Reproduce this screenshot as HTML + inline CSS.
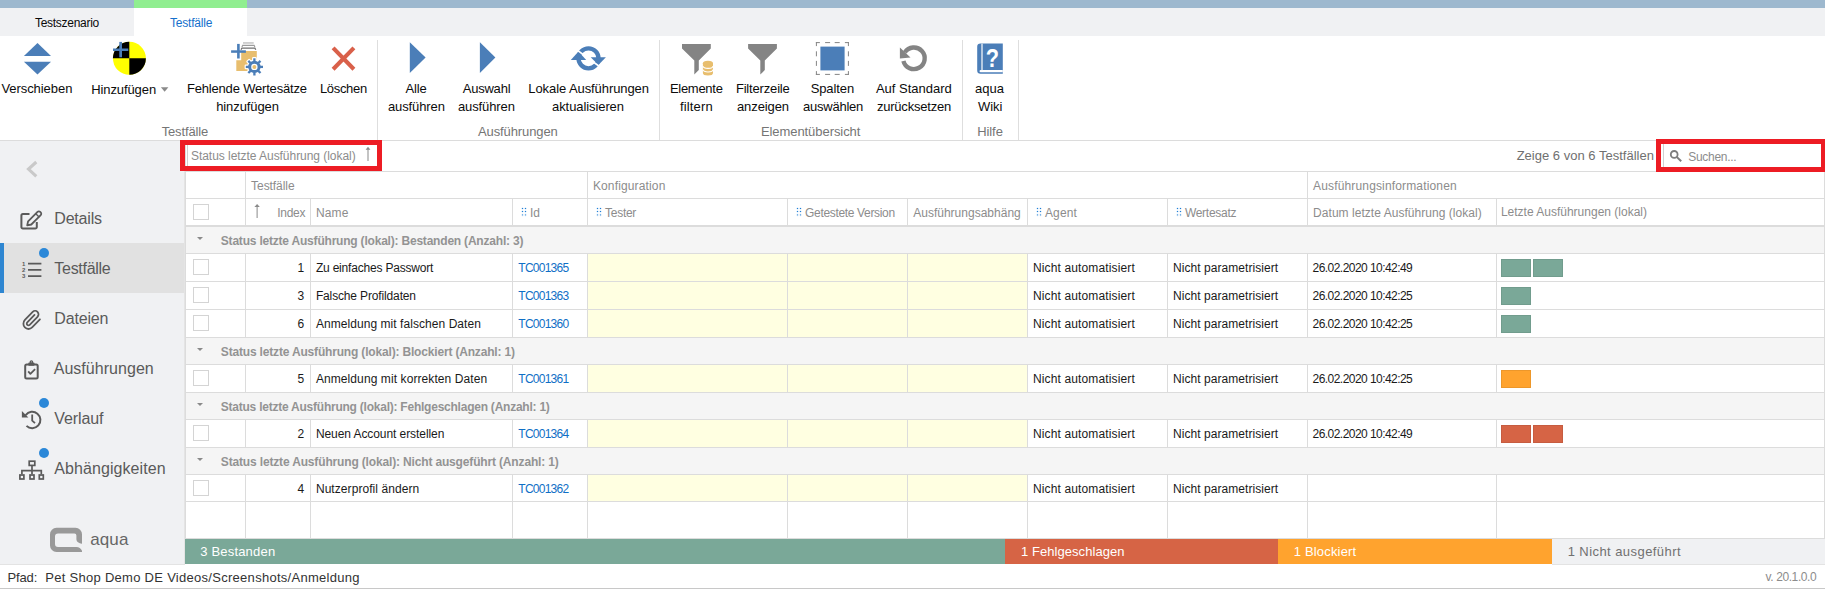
<!DOCTYPE html><html lang="de"><head><meta charset="utf-8"><title>aqua - Testszenario - Testfälle</title><style>html,body{margin:0;padding:0;}
body{width:1825px;height:589px;position:relative;overflow:hidden;background:#fff;font-family:'Liberation Sans',sans-serif;}
body>*{position:absolute;}
.t{white-space:pre;}
#topbar{left:0;top:0;width:1825px;height:8px;background:#9db8ce;}
#tabrow{left:0;top:8px;width:1825px;height:28px;background:#f0f1f3;}
#tabgreen{left:134px;top:0;width:113px;height:8px;background:#90ee90;}
#tabactive{left:134px;top:8px;width:113px;height:28px;background:#fff;}
#ribbon{left:0;top:36px;width:1825px;height:104px;background:#fff;border-bottom:1px solid #dcdcdc;}
.rsep{top:40px;width:1px;height:100px;background:#dedede;}
#ddarrow{left:160.8px;top:87.6px;width:0;height:0;border-left:3.6px solid transparent;border-right:3.6px solid transparent;border-top:4.4px solid #8a8a8a;}
#sidebar{left:0;top:141px;width:184px;height:424px;background:#f0f1f3;border-right:1px solid #e4e4e4;}
#navsel{left:0;top:243px;width:184px;height:50px;background:#e1e1e1;}
#navbar{left:0;top:243px;width:4px;height:50px;background:#2e86d1;}
.dot{left:39px;width:10px;height:10px;border-radius:5px;background:#2b88d8;}
#gridbg{left:185px;top:141px;width:1638px;height:397px;background:#fff;border-left:1px solid #dcdcdc;border-right:1px solid #dcdcdc;}
.vl{width:1px;background:#dcdcdc;}
.hl{left:185px;width:1640px;height:1px;background:#dcdcdc;}
.hl2{left:185px;width:1640px;height:2px;background:#dcdcdc;}
.grp{left:186px;width:1638px;background:#f5f5f5;}
.tri{left:197.2px;width:0;height:0;border-left:3.4px solid transparent;border-right:3.4px solid transparent;border-top:3.6px solid #8a8a8a;}
.yel{left:588px;width:439px;background:#ffffe1;}
.cb{left:193px;width:14px;height:14px;border:1px solid #d4d4d4;background:#fff;}
.bar{width:30px;height:18px;box-shadow:inset 0 0 0 1px rgba(0,0,0,.07);}
.sb{top:539px;height:25px;}
#footer{left:0;top:564px;width:1825px;height:24px;background:#fff;border-bottom:1px solid #c8c8c8;}#footline{left:0;top:564px;width:185px;height:1px;background:#e3e3e3;}#footline2{left:1552px;top:564px;width:273px;height:1px;background:#e3e3e3;}
.red{border:5px solid #ed1c24;}
</style></head><body><div id="topbar"></div><div id="tabrow"></div><div id="tabgreen"></div><div id="tabactive"></div><span class="t" style="left:35.00px;top:16.84px;font-size:12px;line-height:12px;color:#0a0a0a;letter-spacing:-0.290px;">Testszenario</span><span class="t" style="left:169.90px;top:16.84px;font-size:12px;line-height:12px;color:#1570cc;letter-spacing:-0.181px;">Testfälle</span><div id="ribbon"></div><span class="t" style="left:1.38px;top:81.80px;font-size:13px;line-height:13px;color:#0c0c0c;letter-spacing:-0.056px;">Verschieben</span><span class="t" style="left:91.27px;top:82.60px;font-size:13px;line-height:13px;color:#0c0c0c;letter-spacing:-0.103px;">Hinzufügen</span><span class="t" style="left:186.98px;top:81.80px;font-size:13px;line-height:13px;color:#0c0c0c;letter-spacing:-0.184px;">Fehlende Wertesätze</span><span class="t" style="left:216.18px;top:99.60px;font-size:13px;line-height:13px;color:#0c0c0c;letter-spacing:-0.098px;">hinzufügen</span><span class="t" style="left:319.88px;top:81.80px;font-size:13px;line-height:13px;color:#0c0c0c;letter-spacing:-0.315px;">Löschen</span><span class="t" style="left:405.48px;top:81.80px;font-size:13px;line-height:13px;color:#0c0c0c;letter-spacing:-0.159px;">Alle</span><span class="t" style="left:387.98px;top:99.60px;font-size:13px;line-height:13px;color:#0c0c0c;letter-spacing:-0.109px;">ausführen</span><span class="t" style="left:462.68px;top:81.80px;font-size:13px;line-height:13px;color:#0c0c0c;letter-spacing:-0.213px;">Auswahl</span><span class="t" style="left:457.98px;top:99.60px;font-size:13px;line-height:13px;color:#0c0c0c;letter-spacing:-0.109px;">ausführen</span><span class="t" style="left:528.27px;top:81.80px;font-size:13px;line-height:13px;color:#0c0c0c;letter-spacing:-0.079px;">Lokale Ausführungen</span><span class="t" style="left:552.07px;top:99.60px;font-size:13px;line-height:13px;color:#0c0c0c;letter-spacing:-0.088px;">aktualisieren</span><span class="t" style="left:669.88px;top:81.80px;font-size:13px;line-height:13px;color:#0c0c0c;letter-spacing:-0.271px;">Elemente</span><span class="t" style="left:679.88px;top:99.60px;font-size:13px;line-height:13px;color:#0c0c0c;letter-spacing:0.165px;">filtern</span><span class="t" style="left:735.88px;top:81.80px;font-size:13px;line-height:13px;color:#0c0c0c;letter-spacing:-0.170px;">Filterzeile</span><span class="t" style="left:736.97px;top:99.60px;font-size:13px;line-height:13px;color:#0c0c0c;letter-spacing:-0.091px;">anzeigen</span><span class="t" style="left:810.67px;top:81.80px;font-size:13px;line-height:13px;color:#0c0c0c;letter-spacing:-0.106px;">Spalten</span><span class="t" style="left:802.97px;top:99.60px;font-size:13px;line-height:13px;color:#0c0c0c;letter-spacing:-0.223px;">auswählen</span><span class="t" style="left:875.88px;top:81.80px;font-size:13px;line-height:13px;color:#0c0c0c;letter-spacing:0.005px;">Auf Standard</span><span class="t" style="left:876.88px;top:99.60px;font-size:13px;line-height:13px;color:#0c0c0c;letter-spacing:-0.204px;">zurücksetzen</span><span class="t" style="left:974.97px;top:81.80px;font-size:13px;line-height:13px;color:#0c0c0c;letter-spacing:0.007px;">aqua</span><span class="t" style="left:977.88px;top:99.60px;font-size:13px;line-height:13px;color:#0c0c0c;letter-spacing:0.001px;">Wiki</span><span class="t" style="left:161.68px;top:124.60px;font-size:13px;line-height:13px;color:#757575;letter-spacing:-0.139px;">Testfälle</span><span class="t" style="left:477.98px;top:124.60px;font-size:13px;line-height:13px;color:#757575;letter-spacing:-0.100px;">Ausführungen</span><span class="t" style="left:760.88px;top:124.60px;font-size:13px;line-height:13px;color:#757575;letter-spacing:-0.063px;">Elementübersicht</span><span class="t" style="left:977.17px;top:124.60px;font-size:13px;line-height:13px;color:#757575;letter-spacing:-0.073px;">Hilfe</span><div class="rsep" style="left:377px"></div><div class="rsep" style="left:659px"></div><div class="rsep" style="left:962px"></div><div class="rsep" style="left:1018px"></div><svg id="ribbon-icons" width="1825" height="141" viewBox="0 0 1825 141" style="left:0;top:0">
<g fill="#4b7eb8">
<polygon points="23.9,56 51,56 37.5,43"/><polygon points="23.9,61.7 51,61.7 37.5,74.4"/>
</g>
<circle cx="129.4" cy="58.35" r="16.5" fill="#ffff00"/>
<path d="M129.3,58.2H112.9A16.5,16.5 0 0 1 129.3,41.85Z" fill="#000"/>
<path d="M129.3,58.2H145.9A16.5,16.5 0 0 1 129.3,74.85Z" fill="#000"/>
<g fill="#4b7eb8"><rect x="113" y="48.5" width="15.3" height="2.5"/><rect x="119.3" y="41.9" width="2.7" height="15.4"/></g>
<g id="ic-wertesatz">
<rect x="243" y="42.2" width="10.7" height="1.5" fill="#c4c4c4"/>
<path d="M241.9,46.9L242.7,45.3H254.1L254.9,46.9" stroke="#9c9c9c" stroke-width="1.2" fill="none"/>
<path d="M241,49.8L241.9,48.1H254.9L255.8,49.8" stroke="#707070" stroke-width="1.2" fill="none"/>
<path d="M241.2,51H256.8V71H236.3V60.2H241.2Z" fill="#e8be6e"/>
<g transform="translate(254.4 66.9)" fill="#fff" stroke="#fff" stroke-width="2.4" stroke-linejoin="round"><circle r="4.7" fill="none" stroke-width="5.4"/>
<rect x="-1.15" y="-8.6" width="2.3" height="3.4"/><rect x="-1.15" y="5.2" width="2.3" height="3.4"/>
<rect x="-8.6" y="-1.15" width="3.4" height="2.3"/><rect x="5.2" y="-1.15" width="3.4" height="2.3"/>
<g transform="rotate(45)"><rect x="-1.15" y="-8.6" width="2.3" height="3.4"/><rect x="-1.15" y="5.2" width="2.3" height="3.4"/>
<rect x="-8.6" y="-1.15" width="3.4" height="2.3"/><rect x="5.2" y="-1.15" width="3.4" height="2.3"/></g></g>
<g fill="#4b7eb8"><rect x="231.1" y="50.3" width="14.8" height="2.5"/><rect x="237.1" y="43.9" width="2.6" height="14.6"/></g>
<g transform="translate(254.4 66.9)" fill="#4b7eb8">
<circle r="4.7" fill="none" stroke="#4b7eb8" stroke-width="3"/>
<rect x="-1.15" y="-8.6" width="2.3" height="3.4"/><rect x="-1.15" y="5.2" width="2.3" height="3.4"/>
<rect x="-8.6" y="-1.15" width="3.4" height="2.3"/><rect x="5.2" y="-1.15" width="3.4" height="2.3"/>
<g transform="rotate(45)"><rect x="-1.15" y="-8.6" width="2.3" height="3.4"/><rect x="-1.15" y="5.2" width="2.3" height="3.4"/>
<rect x="-8.6" y="-1.15" width="3.4" height="2.3"/><rect x="5.2" y="-1.15" width="3.4" height="2.3"/></g>
</g>
</g>
<path d="M333.1,47.9L353.9,69.2M353.9,47.9L333.1,69.2" stroke="#d9604a" stroke-width="4.1" fill="none"/>
<g fill="#4b7eb8">
<polygon points="409.8,42.3 425.6,57.6 409.8,72.9"/><polygon points="479.9,42.3 495.4,57.6 479.9,72.9"/>
</g>
<g id="ic-refresh">
<circle cx="588.5" cy="58.3" r="10" fill="none" stroke="#4b7eb8" stroke-width="4.3"/>
<polygon points="570.8,59.9 578.5,51.6 586.2,59.9" fill="#4b7eb8"/>
<polygon points="590.7,57.2 605.9,57.2 598.4,65.1" fill="#4b7eb8"/>
<path d="M575.5,48.9L600.5,67.3" stroke="#fff" stroke-width="1.7"/>
</g>
<polygon points="682,44.1 710.8,44.1 710.8,48.4 698.8,60.6 698.8,70.1 694.3,74.6 694.3,60.6 682,48.4" fill="#848484"/>
<g id="ic-db" fill="#e8be6e">
<path d="M702.9,63.3V73A5.05,2.5 0 0 0 713,73V63.3Z"/>
<ellipse cx="707.95" cy="63.3" rx="5.05" ry="2.5"/>
<path d="M702.9,65.9A5.05,2.5 0 0 0 713,65.9M702.9,69.5A5.05,2.5 0 0 0 713,69.5" stroke="#fff" stroke-width="1.1" fill="none"/>
</g>
<polygon points="748.1,44.1 776.9,44.1 776.9,48.4 764.8,60.4 764.8,70.1 760.3,74.6 760.3,60.4 748.1,48.4" fill="#848484"/>
<g stroke="#858585" stroke-width="1" stroke-dasharray="4 5.2 5 4.6 5 5.2 4" fill="none">
<path d="M815.9,42.6H848.9"/><path d="M815.9,74.4H848.9"/><path d="M816.4,42.1V74.9"/><path d="M848.4,42.1V74.9"/>
</g>
<rect x="820.4" y="46.6" width="24.2" height="23.8" fill="#4b7eb8"/>
<g id="ic-reset">
<path d="M904.84,52.42A10.8,10.8 0 1 1 903.42,60.91" fill="none" stroke="#848484" stroke-width="4.4"/>
<polygon points="899.9,47.5 899.9,58.6 910.5,57.6" fill="#848484"/>
</g>
<g id="ic-wiki">
<path d="M980.5,43.4H1002.8V73.7H980.5A3.3,3.3 0 0 1 977.2,70.4V46.7A3.3,3.3 0 0 1 980.5,43.4Z" fill="#4b7eb8"/>
<path d="M1002.8,70.1H980.6A1.05,1.05 0 0 0 980.6,72.2H1002.8Z" fill="#fff"/>
<rect x="981.1" y="43.4" width="1.8" height="26.7" fill="#c3d3e6"/>
<text x="992.4" y="67" font-family="'Liberation Sans',sans-serif" font-size="26.5" font-weight="700" fill="#fff" text-anchor="middle" transform="translate(992.4 0) scale(0.82 1) translate(-992.4 0)">?</text>
</g>
<polygon points="160.9,87.3 168.4,87.3 164.65,91.8" fill="#8a8a8a"/>
</svg>
<div id="sidebar"></div><div id="navsel"></div><div id="navbar"></div><span class="t" style="left:54.30px;top:211.36px;font-size:16px;line-height:16px;color:#5a5a5a;letter-spacing:-0.201px;">Details</span><span class="t" style="left:54.30px;top:260.56px;font-size:16px;line-height:16px;color:#5a5a5a;letter-spacing:-0.278px;">Testfälle</span><span class="t" style="left:54.30px;top:311.06px;font-size:16px;line-height:16px;color:#5a5a5a;letter-spacing:-0.165px;">Dateien</span><span class="t" style="left:53.70px;top:360.56px;font-size:16px;line-height:16px;color:#5a5a5a;letter-spacing:0.038px;">Ausführungen</span><span class="t" style="left:54.30px;top:410.76px;font-size:16px;line-height:16px;color:#5a5a5a;letter-spacing:-0.102px;">Verlauf</span><span class="t" style="left:54.30px;top:460.56px;font-size:16px;line-height:16px;color:#5a5a5a;letter-spacing:0.071px;">Abhängigkeiten</span><div class="dot" style="top:248px"></div><div class="dot" style="top:398px"></div><div class="dot" style="top:448px"></div><span class="t" style="left:90.17px;top:530.61px;font-size:17px;line-height:17px;color:#666;letter-spacing:0.130px;">aqua</span><svg id="side-icons" width="185" height="424" viewBox="0 141 185 424" style="left:0;top:141px">
<polyline points="36.3,162 28.5,169.1 36.3,176.4" fill="none" stroke="#c9c9c9" stroke-width="3.1"/>
<g fill="none" stroke="#5a5a5a" stroke-width="2" stroke-linejoin="round" stroke-linecap="round">
<path d="M29.5,214H22.9A1.5,1.5 0 0 0 21.4,215.5V227A1.5,1.5 0 0 0 22.9,228.5H35.3A1.5,1.5 0 0 0 36.8,227V222" stroke-linecap="butt"/>
<path d="M27.2,225.4L28.1,221.3L37.5,211.9A1.9,1.9 0 0 1 40.2,211.9L40.7,212.4A1.9,1.9 0 0 1 40.7,215.1L31.3,224.5Z" stroke-width="1.8" fill="#f0f1f3"/>
<path d="M35.8,213.8L38.8,216.8" stroke-width="1.4"/>
</g>
<g stroke="#5a5a5a" stroke-width="1.7"><path d="M28,263.7H41.4M28,269.9H41.4M28,276.1H41.4"/></g>
<g font-family="'Liberation Sans',sans-serif" font-size="6" font-weight="700" fill="#5a5a5a" text-anchor="middle">
<text x="23.6" y="265.8">1</text><text x="23.6" y="272">2</text><text x="23.6" y="278.2">3</text></g>
<g id="ic-clip" transform="translate(21.7 309.6) scale(0.85 0.88)"><path fill="none" stroke="#5a5a5a" stroke-width="2.1" stroke-linecap="round" stroke-linejoin="round" d="M21.44 11.05l-9.19 9.19a6 6 0 0 1-8.49-8.49l9.19-9.19a4 4 0 0 1 5.66 5.66l-9.2 9.19a2 2 0 0 1-2.83-2.83l8.49-8.48"/></g>
<g fill="none" stroke="#5a5a5a" stroke-width="2" stroke-linejoin="round">
<rect x="25.2" y="364.5" width="12.5" height="13.9" rx="1.5"/>
<path d="M28.2,371.4L30.4,373.9L35.1,369.2" stroke-width="1.8"/>
</g>
<rect x="28.3" y="362.6" width="6.2" height="3.2" rx="0.8" fill="#5a5a5a"/>
<circle cx="31.4" cy="362" r="1.2" fill="none" stroke="#5a5a5a" stroke-width="1.3"/>
<g fill="none" stroke="#5a5a5a" stroke-width="2">
<path d="M25.65,415.06A8.2,8.2 0 1 1 26.5,425.9"/>
<path d="M32.2,414.6V420.6L35,423.1" stroke-width="1.8"/>
</g>
<polygon points="21.9,411 21.9,417.4 28.4,417.4" fill="#5a5a5a"/>
<g fill="none" stroke="#5a5a5a" stroke-width="1.7">
<rect x="29.2" y="461.2" width="5.6" height="4.2"/>
<path d="M32,465.4V470.6M21.9,474.3V470.6H41.3V474.3M32,470.6V474.3"/>
<rect x="19.9" y="475" width="4" height="4"/><rect x="30" y="475" width="4" height="4"/><rect x="39.3" y="475" width="4" height="4"/>
</g>
<path id="aqua-logo" fill="#999" d="M56.5,527.8H75.5A6.5,6.5 0 0 1 82,534.3V543.7C79,543.4 76.4,541.6 76.4,539.2V535.6A2,2 0 0 0 74.4,533.6H58A3,3 0 0 0 55,536.6V544A3,3 0 0 0 58,547H76.4C79,547 81,548.4 82,550.8V552H56.5A6.5,6.5 0 0 1 50,545.5V534.3A6.5,6.5 0 0 1 56.5,527.8Z"/>
</svg>
<div id="gridbg"></div><span class="t" style="left:191.00px;top:150.24px;font-size:12px;line-height:12px;color:#8c8c8c;letter-spacing:-0.047px;">Status letzte Ausführung (lokal)</span><span class="t" style="left:1516.67px;top:149.30px;font-size:13px;line-height:13px;color:#707070;letter-spacing:0.007px;">Zeige 6 von 6 Testfällen</span><span class="t" style="left:1688.20px;top:151.04px;font-size:12px;line-height:12px;color:#8c8c8c;letter-spacing:-0.289px;">Suchen...</span><span class="t" style="left:251.10px;top:180.04px;font-size:12px;line-height:12px;color:#8c8c8c;letter-spacing:-0.070px;">Testfälle</span><span class="t" style="left:592.90px;top:180.04px;font-size:12px;line-height:12px;color:#8c8c8c;letter-spacing:0.145px;">Konfiguration</span><span class="t" style="left:1313.10px;top:180.04px;font-size:12px;line-height:12px;color:#8c8c8c;letter-spacing:0.150px;">Ausführungsinformationen</span><span class="t" style="left:277.20px;top:206.84px;font-size:12px;line-height:12px;color:#8c8c8c;letter-spacing:-0.252px;">Index</span><span class="t" style="left:315.90px;top:206.84px;font-size:12px;line-height:12px;color:#8c8c8c;letter-spacing:0.146px;">Name</span><span class="t" style="left:530.10px;top:206.84px;font-size:12px;line-height:12px;color:#8c8c8c;letter-spacing:-0.108px;">Id</span><span class="t" style="left:605.10px;top:206.84px;font-size:12px;line-height:12px;color:#8c8c8c;letter-spacing:-0.281px;">Tester</span><span class="t" style="left:805.10px;top:206.84px;font-size:12px;line-height:12px;color:#8c8c8c;letter-spacing:-0.335px;">Getestete Version</span><span class="t" style="left:913.20px;top:206.84px;font-size:12px;line-height:12px;color:#8c8c8c;letter-spacing:0.010px;">Ausführungsabhäng</span><span class="t" style="left:1045.00px;top:206.84px;font-size:12px;line-height:12px;color:#8c8c8c;letter-spacing:0.108px;">Agent</span><span class="t" style="left:1184.90px;top:206.84px;font-size:12px;line-height:12px;color:#8c8c8c;letter-spacing:-0.277px;">Wertesatz</span><span class="t" style="left:1313.10px;top:206.84px;font-size:12px;line-height:12px;color:#8c8c8c;letter-spacing:0.041px;">Datum letzte Ausführung (lokal)</span><span class="t" style="left:1500.90px;top:205.84px;font-size:12px;line-height:12px;color:#8c8c8c;letter-spacing:0.000px;">Letzte Ausführungen (lokal)</span><div class="vl" style="left:245px;top:172px;height:54px"></div><div class="vl" style="left:587px;top:172px;height:54px"></div><div class="vl" style="left:1307px;top:172px;height:54px"></div><div class="vl" style="left:310px;top:199px;height:27px"></div><div class="vl" style="left:512px;top:199px;height:27px"></div><div class="vl" style="left:787px;top:199px;height:27px"></div><div class="vl" style="left:907px;top:199px;height:27px"></div><div class="vl" style="left:1027px;top:199px;height:27px"></div><div class="vl" style="left:1167px;top:199px;height:27px"></div><div class="vl" style="left:1496px;top:199px;height:27px"></div><div class="hl" style="top:171px"></div><div class="hl" style="top:198px"></div><div class="hl2" style="top:225px"></div><div class="grp" style="top:227px;height:26px"></div><div class="tri" style="top:237px"></div><span class="t" style="left:220.80px;top:235.14px;font-size:12px;line-height:12px;color:#939393;letter-spacing:-0.203px;font-weight:700;">Status letzte Ausführung (lokal): Bestanden (Anzahl: 3)</span><div class="grp" style="top:338px;height:26px"></div><div class="tri" style="top:348px"></div><span class="t" style="left:220.80px;top:346.14px;font-size:12px;line-height:12px;color:#939393;letter-spacing:-0.174px;font-weight:700;">Status letzte Ausführung (lokal): Blockiert (Anzahl: 1)</span><div class="grp" style="top:393px;height:26px"></div><div class="tri" style="top:403px"></div><span class="t" style="left:220.80px;top:401.14px;font-size:12px;line-height:12px;color:#939393;letter-spacing:-0.235px;font-weight:700;">Status letzte Ausführung (lokal): Fehlgeschlagen (Anzahl: 1)</span><div class="grp" style="top:448px;height:26px"></div><div class="tri" style="top:458px"></div><span class="t" style="left:220.80px;top:456.14px;font-size:12px;line-height:12px;color:#939393;letter-spacing:-0.157px;font-weight:700;">Status letzte Ausführung (lokal): Nicht ausgeführt (Anzahl: 1)</span><div class="yel" style="top:254px;height:27px"></div><div class="vl" style="left:245px;top:254px;height:27px"></div><div class="vl" style="left:310px;top:254px;height:27px"></div><div class="vl" style="left:512px;top:254px;height:27px"></div><div class="vl" style="left:587px;top:254px;height:27px"></div><div class="vl" style="left:787px;top:254px;height:27px"></div><div class="vl" style="left:907px;top:254px;height:27px"></div><div class="vl" style="left:1027px;top:254px;height:27px"></div><div class="vl" style="left:1167px;top:254px;height:27px"></div><div class="vl" style="left:1307px;top:254px;height:27px"></div><div class="vl" style="left:1496px;top:254px;height:27px"></div><div class="cb" style="top:259px"></div><span class="t" style="left:297.50px;top:262.04px;font-size:12px;line-height:12px;color:#1a1a1a;letter-spacing:0.312px;">1</span><span class="t" style="left:315.90px;top:262.04px;font-size:12px;line-height:12px;color:#1a1a1a;letter-spacing:-0.195px;">Zu einfaches Passwort</span><span class="t" style="left:518.30px;top:262.04px;font-size:12px;line-height:12px;color:#0f6fc6;letter-spacing:-0.743px;">TC001365</span><span class="t" style="left:1033.00px;top:262.04px;font-size:12px;line-height:12px;color:#1a1a1a;letter-spacing:0.133px;">Nicht automatisiert</span><span class="t" style="left:1173.00px;top:262.04px;font-size:12px;line-height:12px;color:#1a1a1a;letter-spacing:0.053px;">Nicht parametrisiert</span><span class="t" style="left:1312.60px;top:262.04px;font-size:12px;line-height:12px;color:#1a1a1a;letter-spacing:-0.553px;">26.02.2020 10:42:49</span><div class="bar" style="left:1501px;top:259px;background:#7aa898"></div><div class="bar" style="left:1533px;top:259px;background:#7aa898"></div><div class="yel" style="top:282px;height:27px"></div><div class="vl" style="left:245px;top:282px;height:27px"></div><div class="vl" style="left:310px;top:282px;height:27px"></div><div class="vl" style="left:512px;top:282px;height:27px"></div><div class="vl" style="left:587px;top:282px;height:27px"></div><div class="vl" style="left:787px;top:282px;height:27px"></div><div class="vl" style="left:907px;top:282px;height:27px"></div><div class="vl" style="left:1027px;top:282px;height:27px"></div><div class="vl" style="left:1167px;top:282px;height:27px"></div><div class="vl" style="left:1307px;top:282px;height:27px"></div><div class="vl" style="left:1496px;top:282px;height:27px"></div><div class="cb" style="top:287px"></div><span class="t" style="left:297.50px;top:290.04px;font-size:12px;line-height:12px;color:#1a1a1a;letter-spacing:0.312px;">3</span><span class="t" style="left:315.90px;top:290.04px;font-size:12px;line-height:12px;color:#1a1a1a;letter-spacing:-0.144px;">Falsche Profildaten</span><span class="t" style="left:518.30px;top:290.04px;font-size:12px;line-height:12px;color:#0f6fc6;letter-spacing:-0.743px;">TC001363</span><span class="t" style="left:1033.00px;top:290.04px;font-size:12px;line-height:12px;color:#1a1a1a;letter-spacing:0.133px;">Nicht automatisiert</span><span class="t" style="left:1173.00px;top:290.04px;font-size:12px;line-height:12px;color:#1a1a1a;letter-spacing:0.053px;">Nicht parametrisiert</span><span class="t" style="left:1312.60px;top:290.04px;font-size:12px;line-height:12px;color:#1a1a1a;letter-spacing:-0.553px;">26.02.2020 10:42:25</span><div class="bar" style="left:1501px;top:287px;background:#7aa898"></div><div class="yel" style="top:310px;height:27px"></div><div class="vl" style="left:245px;top:310px;height:27px"></div><div class="vl" style="left:310px;top:310px;height:27px"></div><div class="vl" style="left:512px;top:310px;height:27px"></div><div class="vl" style="left:587px;top:310px;height:27px"></div><div class="vl" style="left:787px;top:310px;height:27px"></div><div class="vl" style="left:907px;top:310px;height:27px"></div><div class="vl" style="left:1027px;top:310px;height:27px"></div><div class="vl" style="left:1167px;top:310px;height:27px"></div><div class="vl" style="left:1307px;top:310px;height:27px"></div><div class="vl" style="left:1496px;top:310px;height:27px"></div><div class="cb" style="top:315px"></div><span class="t" style="left:297.50px;top:318.04px;font-size:12px;line-height:12px;color:#1a1a1a;letter-spacing:0.312px;">6</span><span class="t" style="left:315.90px;top:318.04px;font-size:12px;line-height:12px;color:#1a1a1a;letter-spacing:0.059px;">Anmeldung mit falschen Daten</span><span class="t" style="left:518.30px;top:318.04px;font-size:12px;line-height:12px;color:#0f6fc6;letter-spacing:-0.743px;">TC001360</span><span class="t" style="left:1033.00px;top:318.04px;font-size:12px;line-height:12px;color:#1a1a1a;letter-spacing:0.133px;">Nicht automatisiert</span><span class="t" style="left:1173.00px;top:318.04px;font-size:12px;line-height:12px;color:#1a1a1a;letter-spacing:0.053px;">Nicht parametrisiert</span><span class="t" style="left:1312.60px;top:318.04px;font-size:12px;line-height:12px;color:#1a1a1a;letter-spacing:-0.553px;">26.02.2020 10:42:25</span><div class="bar" style="left:1501px;top:315px;background:#7aa898"></div><div class="yel" style="top:365px;height:27px"></div><div class="vl" style="left:245px;top:365px;height:27px"></div><div class="vl" style="left:310px;top:365px;height:27px"></div><div class="vl" style="left:512px;top:365px;height:27px"></div><div class="vl" style="left:587px;top:365px;height:27px"></div><div class="vl" style="left:787px;top:365px;height:27px"></div><div class="vl" style="left:907px;top:365px;height:27px"></div><div class="vl" style="left:1027px;top:365px;height:27px"></div><div class="vl" style="left:1167px;top:365px;height:27px"></div><div class="vl" style="left:1307px;top:365px;height:27px"></div><div class="vl" style="left:1496px;top:365px;height:27px"></div><div class="cb" style="top:370px"></div><span class="t" style="left:297.50px;top:373.04px;font-size:12px;line-height:12px;color:#1a1a1a;letter-spacing:0.312px;">5</span><span class="t" style="left:315.90px;top:373.04px;font-size:12px;line-height:12px;color:#1a1a1a;letter-spacing:0.091px;">Anmeldung mit korrekten Daten</span><span class="t" style="left:518.30px;top:373.04px;font-size:12px;line-height:12px;color:#0f6fc6;letter-spacing:-0.743px;">TC001361</span><span class="t" style="left:1033.00px;top:373.04px;font-size:12px;line-height:12px;color:#1a1a1a;letter-spacing:0.133px;">Nicht automatisiert</span><span class="t" style="left:1173.00px;top:373.04px;font-size:12px;line-height:12px;color:#1a1a1a;letter-spacing:0.053px;">Nicht parametrisiert</span><span class="t" style="left:1312.60px;top:373.04px;font-size:12px;line-height:12px;color:#1a1a1a;letter-spacing:-0.553px;">26.02.2020 10:42:25</span><div class="bar" style="left:1501px;top:370px;background:#ffa32e"></div><div class="yel" style="top:420px;height:27px"></div><div class="vl" style="left:245px;top:420px;height:27px"></div><div class="vl" style="left:310px;top:420px;height:27px"></div><div class="vl" style="left:512px;top:420px;height:27px"></div><div class="vl" style="left:587px;top:420px;height:27px"></div><div class="vl" style="left:787px;top:420px;height:27px"></div><div class="vl" style="left:907px;top:420px;height:27px"></div><div class="vl" style="left:1027px;top:420px;height:27px"></div><div class="vl" style="left:1167px;top:420px;height:27px"></div><div class="vl" style="left:1307px;top:420px;height:27px"></div><div class="vl" style="left:1496px;top:420px;height:27px"></div><div class="cb" style="top:425px"></div><span class="t" style="left:297.50px;top:428.04px;font-size:12px;line-height:12px;color:#1a1a1a;letter-spacing:0.312px;">2</span><span class="t" style="left:315.90px;top:428.04px;font-size:12px;line-height:12px;color:#1a1a1a;letter-spacing:-0.074px;">Neuen Account erstellen</span><span class="t" style="left:518.30px;top:428.04px;font-size:12px;line-height:12px;color:#0f6fc6;letter-spacing:-0.743px;">TC001364</span><span class="t" style="left:1033.00px;top:428.04px;font-size:12px;line-height:12px;color:#1a1a1a;letter-spacing:0.133px;">Nicht automatisiert</span><span class="t" style="left:1173.00px;top:428.04px;font-size:12px;line-height:12px;color:#1a1a1a;letter-spacing:0.053px;">Nicht parametrisiert</span><span class="t" style="left:1312.60px;top:428.04px;font-size:12px;line-height:12px;color:#1a1a1a;letter-spacing:-0.553px;">26.02.2020 10:42:49</span><div class="bar" style="left:1501px;top:425px;background:#d66445"></div><div class="bar" style="left:1533px;top:425px;background:#d66445"></div><div class="yel" style="top:475px;height:26px"></div><div class="vl" style="left:245px;top:475px;height:26px"></div><div class="vl" style="left:310px;top:475px;height:26px"></div><div class="vl" style="left:512px;top:475px;height:26px"></div><div class="vl" style="left:587px;top:475px;height:26px"></div><div class="vl" style="left:787px;top:475px;height:26px"></div><div class="vl" style="left:907px;top:475px;height:26px"></div><div class="vl" style="left:1027px;top:475px;height:26px"></div><div class="vl" style="left:1167px;top:475px;height:26px"></div><div class="vl" style="left:1307px;top:475px;height:26px"></div><div class="vl" style="left:1496px;top:475px;height:26px"></div><div class="cb" style="top:480px"></div><span class="t" style="left:297.50px;top:483.04px;font-size:12px;line-height:12px;color:#1a1a1a;letter-spacing:0.312px;">4</span><span class="t" style="left:315.90px;top:483.04px;font-size:12px;line-height:12px;color:#1a1a1a;letter-spacing:0.070px;">Nutzerprofil ändern</span><span class="t" style="left:518.30px;top:483.04px;font-size:12px;line-height:12px;color:#0f6fc6;letter-spacing:-0.743px;">TC001362</span><span class="t" style="left:1033.00px;top:483.04px;font-size:12px;line-height:12px;color:#1a1a1a;letter-spacing:0.133px;">Nicht automatisiert</span><span class="t" style="left:1173.00px;top:483.04px;font-size:12px;line-height:12px;color:#1a1a1a;letter-spacing:0.053px;">Nicht parametrisiert</span><div class="vl" style="left:245px;top:502px;height:36px"></div><div class="vl" style="left:310px;top:502px;height:36px"></div><div class="vl" style="left:512px;top:502px;height:36px"></div><div class="vl" style="left:587px;top:502px;height:36px"></div><div class="vl" style="left:787px;top:502px;height:36px"></div><div class="vl" style="left:907px;top:502px;height:36px"></div><div class="vl" style="left:1027px;top:502px;height:36px"></div><div class="vl" style="left:1167px;top:502px;height:36px"></div><div class="vl" style="left:1307px;top:502px;height:36px"></div><div class="vl" style="left:1496px;top:502px;height:36px"></div><div class="hl" style="top:253px"></div><div class="hl" style="top:281px"></div><div class="hl" style="top:309px"></div><div class="hl" style="top:337px"></div><div class="hl" style="top:364px"></div><div class="hl" style="top:392px"></div><div class="hl" style="top:419px"></div><div class="hl" style="top:447px"></div><div class="hl" style="top:474px"></div><div class="hl" style="top:501px"></div><div class="hl" style="top:538px"></div><div class="cb" style="top:204px"></div><svg id="grid-icons" width="1640" height="90" viewBox="185 140 1640 90" style="left:185px;top:140px">
<g fill="#8a8a8a">
<rect x="367.5" y="148" width="1" height="13"/><polygon points="365.6,149.8 370.4,149.8 368,146.8"/>
<rect x="256.6" y="205" width="1" height="13"/><polygon points="254.4,207 259.8,207 257.1,204"/>
</g>
<rect x="187" y="145" width="1" height="21" fill="#d0d0d0"/>
<rect x="1663" y="144" width="1" height="23" fill="#d0d0d0"/>
<g fill="none" stroke="#7d7d7d" stroke-width="1.8"><circle cx="1674.2" cy="154.4" r="3.4"/><path d="M1676.7,156.9L1681.2,161.2" stroke-width="2"/></g>
<g fill="#1f7fd6">
<rect x="521.85" y="207.9" width="1.3" height="1.2" opacity="1"/><rect x="521.85" y="210.9" width="1.3" height="1.2" opacity="1"/><rect x="521.85" y="213.9" width="1.3" height="1.2" opacity="0.55"/><rect x="521.85" y="214.9" width="1.3" height="1.2" opacity="0.4"/><rect x="524.85" y="207.9" width="1.3" height="1.2" opacity="1"/><rect x="524.85" y="210.9" width="1.3" height="1.2" opacity="1"/><rect x="524.85" y="213.9" width="1.3" height="1.2" opacity="0.55"/><rect x="524.85" y="214.9" width="1.3" height="1.2" opacity="0.4"/><rect x="596.85" y="207.9" width="1.3" height="1.2" opacity="1"/><rect x="596.85" y="210.9" width="1.3" height="1.2" opacity="1"/><rect x="596.85" y="213.9" width="1.3" height="1.2" opacity="0.55"/><rect x="596.85" y="214.9" width="1.3" height="1.2" opacity="0.4"/><rect x="599.85" y="207.9" width="1.3" height="1.2" opacity="1"/><rect x="599.85" y="210.9" width="1.3" height="1.2" opacity="1"/><rect x="599.85" y="213.9" width="1.3" height="1.2" opacity="0.55"/><rect x="599.85" y="214.9" width="1.3" height="1.2" opacity="0.4"/><rect x="796.85" y="207.9" width="1.3" height="1.2" opacity="1"/><rect x="796.85" y="210.9" width="1.3" height="1.2" opacity="1"/><rect x="796.85" y="213.9" width="1.3" height="1.2" opacity="0.55"/><rect x="796.85" y="214.9" width="1.3" height="1.2" opacity="0.4"/><rect x="799.85" y="207.9" width="1.3" height="1.2" opacity="1"/><rect x="799.85" y="210.9" width="1.3" height="1.2" opacity="1"/><rect x="799.85" y="213.9" width="1.3" height="1.2" opacity="0.55"/><rect x="799.85" y="214.9" width="1.3" height="1.2" opacity="0.4"/><rect x="1036.85" y="207.9" width="1.3" height="1.2" opacity="1"/><rect x="1036.85" y="210.9" width="1.3" height="1.2" opacity="1"/><rect x="1036.85" y="213.9" width="1.3" height="1.2" opacity="0.55"/><rect x="1036.85" y="214.9" width="1.3" height="1.2" opacity="0.4"/><rect x="1039.85" y="207.9" width="1.3" height="1.2" opacity="1"/><rect x="1039.85" y="210.9" width="1.3" height="1.2" opacity="1"/><rect x="1039.85" y="213.9" width="1.3" height="1.2" opacity="0.55"/><rect x="1039.85" y="214.9" width="1.3" height="1.2" opacity="0.4"/><rect x="1176.85" y="207.9" width="1.3" height="1.2" opacity="1"/><rect x="1176.85" y="210.9" width="1.3" height="1.2" opacity="1"/><rect x="1176.85" y="213.9" width="1.3" height="1.2" opacity="0.55"/><rect x="1176.85" y="214.9" width="1.3" height="1.2" opacity="0.4"/><rect x="1179.85" y="207.9" width="1.3" height="1.2" opacity="1"/><rect x="1179.85" y="210.9" width="1.3" height="1.2" opacity="1"/><rect x="1179.85" y="213.9" width="1.3" height="1.2" opacity="0.55"/><rect x="1179.85" y="214.9" width="1.3" height="1.2" opacity="0.4"/>
</g>
</svg>
<div class="sb" style="left:185px;width:820px;background:#7aa898"></div><div class="sb" style="left:1005px;width:273px;background:#d66445"></div><div class="sb" style="left:1278px;width:274px;background:#ffa32e"></div><div class="sb" style="left:1552px;width:273px;background:#f0f1f3"></div><span class="t" style="left:200.18px;top:544.80px;font-size:13px;line-height:13px;color:#fff;letter-spacing:0.194px;">3 Bestanden</span><span class="t" style="left:1021.07px;top:544.80px;font-size:13px;line-height:13px;color:#fff;letter-spacing:0.051px;">1 Fehlgeschlagen</span><span class="t" style="left:1293.77px;top:544.80px;font-size:13px;line-height:13px;color:#fff;letter-spacing:0.168px;">1 Blockiert</span><span class="t" style="left:1567.67px;top:544.80px;font-size:13px;line-height:13px;color:#707070;letter-spacing:0.435px;">1 Nicht ausgeführt</span><div id="footer"></div><div id="footline"></div><div id="footline2"></div><span class="t" style="left:7.38px;top:570.60px;font-size:13px;line-height:13px;color:#333;letter-spacing:-0.122px;">Pfad:</span><span class="t" style="left:45.27px;top:570.60px;font-size:13px;line-height:13px;color:#333;letter-spacing:0.283px;">Pet Shop Demo DE Videos/Screenshots/Anmeldung</span><span class="t" style="left:1765.60px;top:571.44px;font-size:12px;line-height:12px;color:#8c8c8c;letter-spacing:-0.405px;">v. 20.1.0.0</span><div class="red" style="left:180px;top:140px;width:192px;height:21px"></div><div class="red" style="left:1656px;top:139px;width:160px;height:23px"></div></body></html>
